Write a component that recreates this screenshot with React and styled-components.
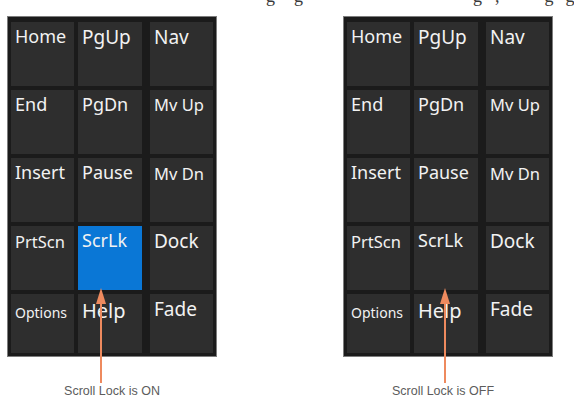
import React from "react";
import styled, { createGlobalStyle } from "styled-components";

const GlobalStyle = createGlobalStyle`
  html, body {
    margin: 0;
    padding: 0;
    background: #ffffff;
  }
`;

const Page = styled.div`
  width: 574px;
  height: 400px;
  overflow: hidden;
  position: relative;
`;

// tail of the previous text line, clipped so only descenders remain
const TopLine = styled.div`
  height: 10px;
  overflow: hidden;
  display: flex;
  font-family: "Liberation Serif", serif;
  font-size: 18px;
  line-height: 18px;
  color: #3a3a3a;
`;

const Descender = styled.span`
  display: block;
  margin-top: -13px;
  margin-left: ${(p) => p.$gap}px;
`;

const Figures = styled.div`
  display: flex;
  gap: 126px;
  padding: 6px 0 0 7px;
`;

const Figure = styled.div`
  position: relative;
  width: 210px;
  display: flex;
  flex-direction: column;
`;

const Panel = styled.div`
  box-sizing: border-box;
  width: 210px;
  height: 341px;
  padding: 5px 3px 3px 3px;
  background: #1b1b1b;
  border: 1px solid #7d7d7d;
  display: flex;
  gap: 8px;
`;

const KeyGrid = styled.div`
  display: grid;
  grid-template-columns: ${(p) => p.$cols};
  grid-template-rows: 64px 64px 64px 64px 59px;
  gap: 4px;
`;

const Key = styled.div`
  box-sizing: border-box;
  padding: ${(p) => p.$pt ?? 3}px 4px 0 4px;
  background: ${(p) => (p.$on ? "#0a77d6" : "#2e2e2e")};
  color: #f2f2f2;
  font-family: "Noto Sans", "Open Sans", sans-serif;
  font-size: ${(p) => p.$size ?? 18}px;
  line-height: 1.3;
  white-space: nowrap;
`;

const Caption = styled.div`
  margin-top: 27px;
  padding-right: ${(p) => p.$shift ?? 0}px;
  text-align: center;
  font-family: "Liberation Sans", Arial, sans-serif;
  font-size: 12.5px;
  line-height: 15px;
  color: #5c5c5c;
`;

const Arrow = styled.svg`
  position: absolute;
  left: ${(p) => p.$x}px;
  top: 272px;
`;

const mainKeys = [
  { t: "Home" },
  { t: "PgUp", size: 19 },
  { t: "End" },
  { t: "PgDn" },
  { t: "Insert" },
  { t: "Pause" },
  { t: "PrtScn", size: 16.5, pt: 5 },
  { t: "ScrLk", scroll: true },
  { t: "Options", size: 14, pt: 10 },
  { t: "Help", size: 20, pt: 4 },
];

const sideKeys = [
  { t: "Nav", size: 19 },
  { t: "Mv Up", size: 16.5, pt: 4 },
  { t: "Mv Dn", size: 16.5, pt: 5 },
  { t: "Dock", size: 19 },
  { t: "Fade", size: 19 },
];

function ArrowMark({ x }) {
  return (
    <Arrow $x={x} width="12" height="95" viewBox="0 0 12 95">
      <line x1="6" y1="12" x2="6" y2="95" stroke="#ee8a5e" strokeWidth="2" />
      <polygon points="6,0 11,16 1,16" fill="#ee8a5e" />
    </Arrow>
  );
}

function KeyPanel({ scrollOn }) {
  const render = (k) => (
    <Key key={k.t} $size={k.size} $pt={k.pt} $on={k.scroll && scrollOn}>
      {k.t}
    </Key>
  );
  return (
    <Panel>
      <KeyGrid $cols="63px 64px">{mainKeys.map(render)}</KeyGrid>
      <KeyGrid $cols="63px">{sideKeys.map(render)}</KeyGrid>
    </Panel>
  );
}

export default function App() {
  return (
    <>
      <GlobalStyle />
      <Page>
        <TopLine>
          <Descender $gap={266}>g</Descender>
          <Descender $gap={19}>g</Descender>
          <Descender $gap={170}>g</Descender>
          <Descender $gap={13}>,</Descender>
          <Descender $gap={45}>g</Descender>
          <Descender $gap={12}>g</Descender>
        </TopLine>
        <Figures>
          <Figure>
            <KeyPanel scrollOn />
            <ArrowMark x={88} />
            <Caption>Scroll Lock is ON</Caption>
          </Figure>
          <Figure>
            <KeyPanel scrollOn={false} />
            <ArrowMark x={96} />
            <Caption $shift={10}>Scroll Lock is OFF</Caption>
          </Figure>
        </Figures>
      </Page>
    </>
  );
}
